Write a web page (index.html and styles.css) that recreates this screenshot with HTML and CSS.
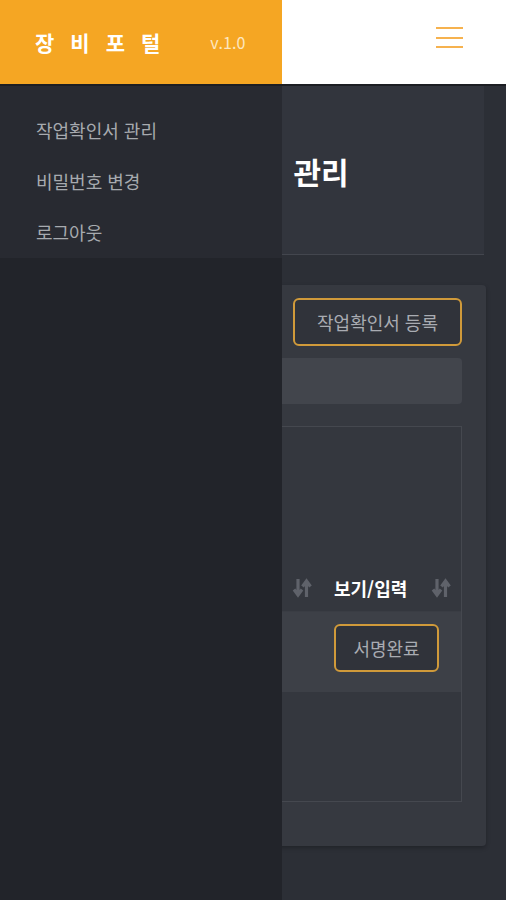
FILE: index.html
```html
<!DOCTYPE html>
<html lang="ko">
<head>
<meta charset="utf-8">
<title>장비포털</title>
<link rel="stylesheet" href="styles.css">
</head>
<body>
<div class="page">
  <header class="topbar">
    <button class="hamburger" aria-label="menu"><span></span><span></span><span></span></button>
  </header>
  <section class="title-area">
    <h2 class="title">작업확인서 관리</h2>
  </section>
  <main class="content">
    <div class="card">
      <div class="actions">
        <button class="btn">작업확인서 등록</button>
      </div>
      <div class="searchbar"></div>
      <div class="table-box">
        <div class="table-top"></div>
        <div class="thead">
          <div class="th th-prev">
            <svg class="sort" viewBox="0 0 20 22" width="20" height="22"><path d="M6 2v15M2 12.5L6 18l4-5.5" fill="none" stroke="#5f626a" stroke-width="3.2"/><path d="M14.5 20V5M10.5 9.5L14.5 4l4 5.5" fill="none" stroke="#5f626a" stroke-width="3.2"/></svg>
          </div>
          <div class="th th-last">
            <span>보기/입력</span>
            <svg class="sort" viewBox="0 0 20 22" width="20" height="22"><path d="M6 2v15M2 12.5L6 18l4-5.5" fill="none" stroke="#5f626a" stroke-width="3.2"/><path d="M14.5 20V5M10.5 9.5L14.5 4l4 5.5" fill="none" stroke="#5f626a" stroke-width="3.2"/></svg>
          </div>
        </div>
        <div class="trow">
          <div class="td-prev"></div>
          <div class="td-last"><button class="btn btn-sm">서명완료</button></div>
        </div>
      </div>
    </div>
  </main>
</div>

<aside class="sidebar">
  <div class="side-head">
    <span class="brand">장비포털</span>
    <span class="ver">v.1.0</span>
  </div>
  <nav class="side-menu">
    <a class="side-item">작업확인서 관리</a>
    <a class="side-item">비밀번호 변경</a>
    <a class="side-item">로그아웃</a>
  </nav>
</aside>
</body>
</html>
```
FILE: styles.css
```css
* { box-sizing: border-box; }
html, body {
  margin: 0;
  padding: 0;
  height: 100%;
  background: #2c2f36;
  font-family: "Noto Sans CJK KR", "Noto Sans", sans-serif;
  overflow: hidden;
}
.page {
  min-height: 100%;
  background: #2c2f36;
}
.topbar {
  height: 86px;
  background: #ffffff;
  border-bottom: 2px solid #1c1e23;
  display: flex;
  align-items: center;
  justify-content: flex-end;
  padding-right: 43px;
}
.hamburger {
  background: none;
  border: 0;
  padding: 0;
  width: 27px;
  height: 21px;
  display: flex;
  flex-direction: column;
  justify-content: space-between;
  margin-top: -9px;
}
.hamburger span {
  display: block;
  height: 2px;
  background: #f6b24f;
}
.title-area {
  background: #32353d;
  height: 169px;
  margin-right: 22px;
  border-bottom: 1px solid #43464e;
  display: flex;
  align-items: center;
  padding-top: 2px;
}
.title {
  margin: 0 0 0 141px;
  color: #ffffff;
  font-size: 30px;
  font-weight: 700;
  word-spacing: 6px;
  white-space: nowrap;
}
.content {
  padding: 30px 20px 40px 20px;
}
.card {
  background: #363940;
  border-radius: 4px;
  padding: 13px 24px 44px 20px;
  box-shadow: 0 2px 4px rgba(0,0,0,0.25);
}
.actions {
  display: flex;
  justify-content: flex-end;
  padding-right: 0;
}
.btn {
  font-family: inherit;
  background: #30333a;
  border: 2px solid #d09a3a;
  border-radius: 6px;
  color: #a9acb2;
  font-size: 18px;
  height: 48px;
  width: 169px;
  padding: 0;
  cursor: pointer;
}
.btn-sm {
  width: 105px;
}
.searchbar {
  margin-top: 12px;
  height: 46px;
  background: #42454c;
  border-radius: 4px;
}
.table-box {
  margin-top: 22px;
  height: 376px;
  border: 1px solid #45484f;
  background: #34373e;
}
.table-top {
  height: 138px;
}
.thead {
  display: flex;
  height: 47px;
  align-items: center;
  border-bottom: 1px solid #3a3d44;
}
.th {
  display: flex;
  align-items: center;
}
.th-prev {
  flex: 1;
  justify-content: flex-end;
  padding-right: 4px;
}
.th-last {
  width: 145px;
  justify-content: space-between;
  padding-left: 18px;
  padding-right: 10px;
  color: #ffffff;
  font-weight: 700;
  font-size: 18px;
}
.sort { display: block; }
.trow {
  display: flex;
  height: 80px;
  background: #3d4047;
  align-items: center;
}
.td-prev { flex: 1; }
.td-last {
  width: 145px;
  padding-left: 18px;
  padding-bottom: 8px;
}
.sidebar {
  position: fixed;
  top: 0;
  left: 0;
  width: 282px;
  height: 100%;
  background: #22242a;
}
.side-head {
  height: 84px;
  background: #f5a623;
  display: flex;
  align-items: center;
  padding-left: 35px;
  border-bottom: 2px solid #1c1e23;
  box-sizing: content-box;
}
.brand {
  color: #ffffff;
  font-size: 21px;
  font-weight: 700;
  letter-spacing: 16px;
}
.ver {
  color: #fde6c0;
  font-size: 16px;
  margin-left: 34px;
  margin-top: 0;
}
.side-menu {
  background: #282a31;
  padding-top: 19px;
  height: 172px;
  display: flex;
  flex-direction: column;
}
.side-item {
  display: block;
  height: 51px;
  line-height: 51px;
  padding-left: 36px;
  color: #a7aaaf;
  font-size: 18px;
  text-decoration: none;
}
```
